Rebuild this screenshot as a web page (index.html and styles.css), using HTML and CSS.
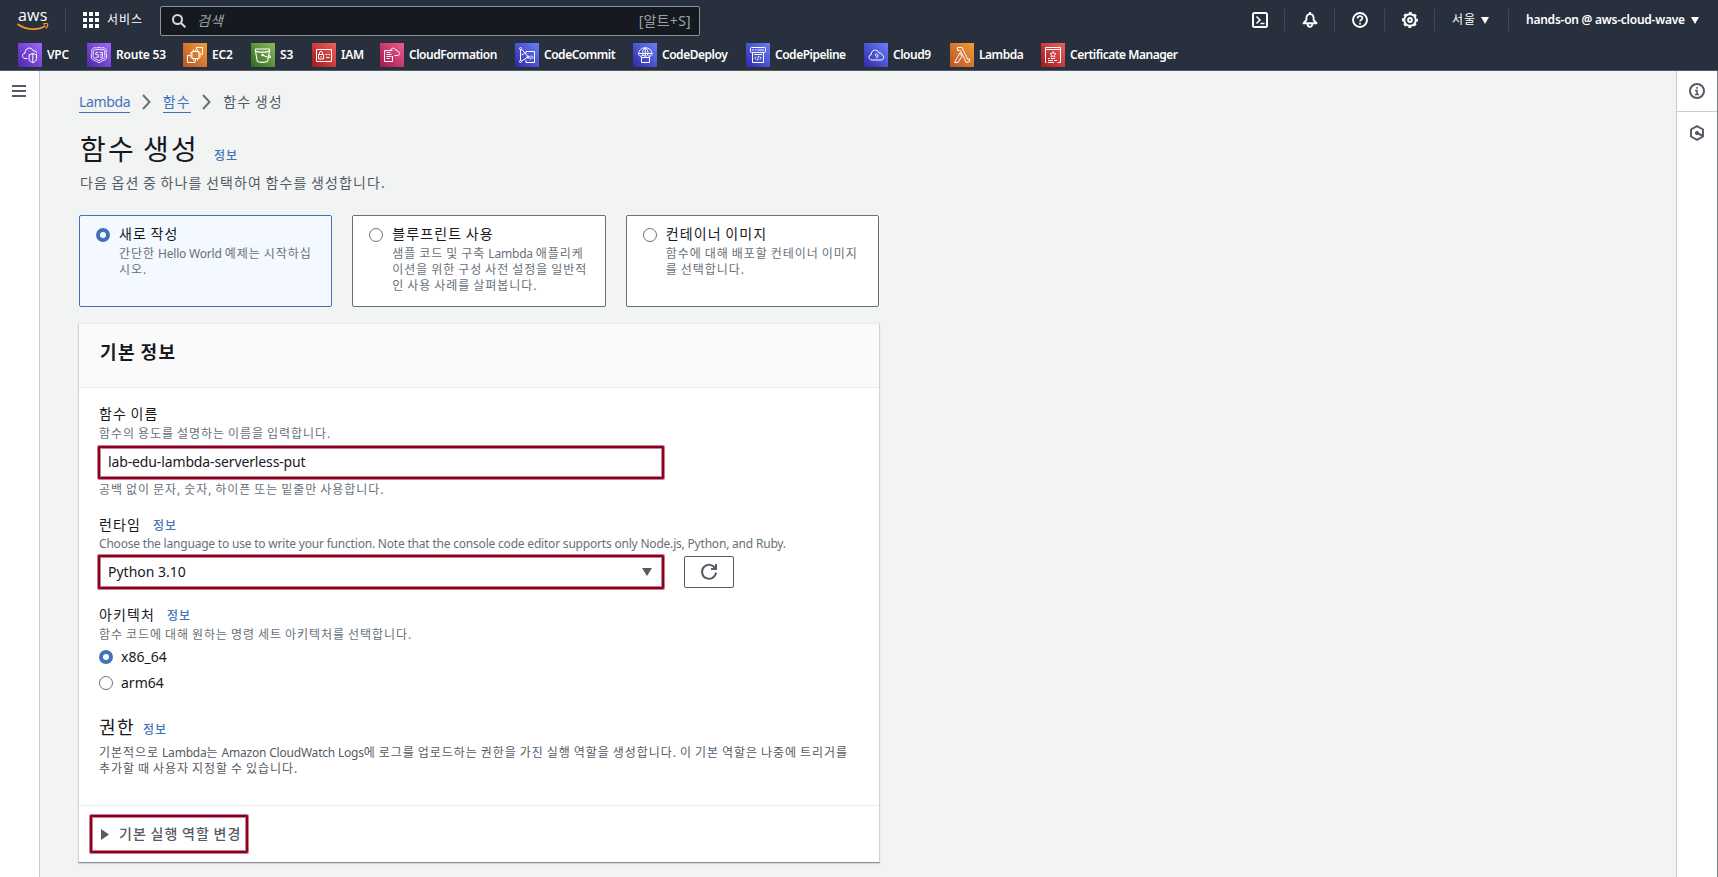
FILE: index.html
```html
<!DOCTYPE html>
<html lang="ko">
<head>
<meta charset="utf-8">
<title>함수 생성 - Lambda</title>
<link rel="stylesheet" href="styles.css">
</head>
<body>
<svg class="defs" width="0" height="0" aria-hidden="true">
  <defs>
    <linearGradient id="purple" x1="0" y1="1" x2="1" y2="0"><stop offset="0" stop-color="#4d27a8"/><stop offset="1" stop-color="#a166ff"/></linearGradient>
    <linearGradient id="orange" x1="0" y1="1" x2="1" y2="0"><stop offset="0" stop-color="#b8532b"/><stop offset="1" stop-color="#f29c34"/></linearGradient>
    <linearGradient id="green" x1="0" y1="1" x2="1" y2="0"><stop offset="0" stop-color="#2f6a1e"/><stop offset="1" stop-color="#8bba5c"/></linearGradient>
    <linearGradient id="red" x1="0" y1="1" x2="1" y2="0"><stop offset="0" stop-color="#a3181c"/><stop offset="1" stop-color="#f0615e"/></linearGradient>
    <linearGradient id="pink" x1="0" y1="1" x2="1" y2="0"><stop offset="0" stop-color="#a3184f"/><stop offset="1" stop-color="#ef5c8d"/></linearGradient>
    <linearGradient id="blue" x1="0" y1="1" x2="1" y2="0"><stop offset="0" stop-color="#3128a8"/><stop offset="1" stop-color="#6880f8"/></linearGradient>
  </defs>
</svg>

<header class="header">
  <div class="topbar">
    <div class="logo">
      <span class="logo-text">aws</span>
      <svg class="logo-smile" width="32" height="8" viewBox="0 0 32 8"><path d="M.5 1C9 7.400 21 7.600 28.500 2.700" fill="none" stroke="#f7981f" stroke-width="1.700"/><path d="M26 1.200c2-.8 4-.8 4.500-.3.400.6-.3 3-1.600 4.600" fill="none" stroke="#f7981f" stroke-width="1.200"/></svg>
    </div>
    <span class="sep sep-logo"></span>
    <div class="services">
      <svg width="16" height="16" viewBox="0 0 16 16" fill="#fff"><path d="M0 0h4v4H0zM6 0h4v4H6zM12 0h4v4h-4zM0 6h4v4H0zM6 6h4v4H6zM12 6h4v4h-4zM0 12h4v4H0zM6 12h4v4H6zM12 12h4v4h-4z"/></svg>
      <span class="ko">서비스</span>
    </div>
    <div class="search">
      <svg width="14" height="14" viewBox="0 0 14 14" fill="none" stroke="#d5dbdb" stroke-width="2"><circle cx="5.500" cy="5.500" r="4.500"/><path d="M8.800 8.800l4.500 4.500"/></svg>
      <span class="search-hint ko">검색</span>
      <span class="search-key ko">[알트+S]</span>
    </div>
    <div class="tools">
      <span class="tool"><svg width="16" height="16" viewBox="0 0 16 16" fill="none" stroke="#fff" stroke-width="2"><rect x="1" y="1" width="14" height="14" rx="1.500"/><path d="M4.500 4.500L8 8l-3.500 3.500M8.500 11.500h4" stroke-width="1.600"/></svg></span>
      <span class="sep"></span>
      <span class="tool"><svg width="16" height="16" viewBox="0 0 16 16" fill="none" stroke="#fff" stroke-width="1.900"><path d="M1.500 11.200h13L11.600 8V6C11.600 3.600 10 2.100 8 2.100S4.400 3.600 4.400 6v2z" stroke-linejoin="round"/><path d="M5.600 11.500c0 4.500 4.800 4.500 4.800 0"/><path d="M8 0v2"/></svg></span>
      <span class="sep sep-tall"></span>
      <span class="tool"><svg width="16" height="16" viewBox="0 0 16 16" fill="none" stroke="#fff" stroke-width="1.900"><circle cx="8" cy="8" r="7"/><path d="M5.600 6.400C5.600 3.200 10.400 3.300 10.400 6c0 1.700-2.400 1.700-2.400 3.500M8 10.700v1.800" stroke-width="1.700"/></svg></span>
      <span class="sep"></span>
      <span class="tool"><svg width="16" height="16" viewBox="0 0 16 16" fill="none" stroke="#fff"><circle cx="8" cy="8" r="5.800" stroke-width="2"/><circle cx="8" cy="8" r="7.100" stroke-width="1.700" stroke-dasharray="3.100 2.476" stroke-dashoffset="1.500"/><circle cx="8" cy="8" r="1.900" stroke-width="2"/></svg></span>
      <span class="sep"></span>
      <span class="menu region"><span class="ko">서울</span><svg width="8" height="7" viewBox="0 0 8 7"><path d="M0 0h8L4 7z" fill="#fff"/></svg></span>
      <span class="sep"></span>
      <span class="menu account"><span>hands-on @ aws-cloud-wave</span><svg width="8" height="7" viewBox="0 0 8 7"><path d="M0 0h8L4 7z" fill="#fff"/></svg></span>
    </div>
  </div>
  <nav class="favorites">
    <a class="fav"><svg width="24" height="24" viewBox="0 0 24 24"><path fill="url(#purple)" d="M0 0h24v24H0z"/><g fill="none" stroke="#fff"><path d="M9.500 15.500H7.200C3.500 15 3.700 10.500 7 10.300 6.800 5 13.300 2.900 15.300 8c2.200-.7 3.300.6 3.400 2.200"/><path d="M14.800 10.500l3.700 1.300v3.900c0 2-1.800 3.300-3.700 4-1.900-.7-3.700-2-3.700-4v-3.900zM14.800 11v8.300"/></g></svg>VPC</a>
    <a class="fav"><svg width="24" height="24" viewBox="0 0 24 24"><path fill="url(#purple)" d="M0 0h24v24H0z"/><g fill="none" stroke="#fff" stroke-width=".9"><path d="M7 4.500c1.700.8 3.500.3 5-.3 1.500.6 3.300 1.100 5 .3l2.500 2.600c-1.200 2 .5 4.500.2 6.900-.4 3-4.400 3.600-7.700 5.700-3.300-2.100-7.300-2.700-7.700-5.700-.3-2.400 1.400-4.900.2-6.900z"/><path d="M7.500 6.500c1.500.6 3 .2 4.500-.3 1.500.5 3 .9 4.500.3L17.700 8c-.6 1.800.5 3.800.2 5.500-.3 2-3 2.300-5.900 4.100-2.900-1.800-5.600-2.100-5.900-4.100-.3-1.700.8-3.700.2-5.500z"/><path d="M11.300 9.500H8.800v2.200h2.500v2.500H8.500M12.800 9.500h2.700v4.700h-2.800M13 11.800h2.500"/></g></svg>Route 53</a>
    <a class="fav"><svg width="24" height="24" viewBox="0 0 24 24"><path fill="url(#orange)" d="M0 0h24v24H0z"/><g fill="none" stroke="#fff"><path d="M13.500 6.500V4.500h6v7h-2M7 12.500H4.500v7h7.500V17"/><path d="M9 8.500h7v7H9zM10.500 6.500v2M12.500 6.500v2M14.500 6.500v2M10.500 15.500v2M12.500 15.500v2M14.500 15.500v2M7 10h2M7 12h2M7 14h2M16 10h2M16 12h2M16 14h2"/></g></svg>EC2</a>
    <a class="fav"><svg width="24" height="24" viewBox="0 0 24 24"><path fill="url(#green)" d="M0 0h24v24H0z"/><g fill="none" stroke="#fff" stroke-width="1.100"><path d="M4.500 6v2l1.700 10c1.500 1.800 9 1.800 10.500 0L18.500 8V6M4.500 6h14M4.500 8c2 1.500 12 1.500 14 0"/><circle cx="11.500" cy="12" r=".7"/><path d="M12 12.200c2 1 5.500 2.600 7.200 2.200.7-.3-.3-1.600-1.600-2.200"/></g></svg>S3</a>
    <a class="fav"><svg width="24" height="24" viewBox="0 0 24 24"><path fill="url(#red)" d="M0 0h24v24H0z"/><g fill="none" stroke="#fff"><path d="M4.500 6.500h15v12h-15z"/><path d="M6.500 11.500h5v4.500h-5zM7.500 11.500V9.700c0-1.700 3-1.700 3 0v1.800M9 13v1.500M13.500 11.500h2M16.500 11.500h1.500M14 14.500h3.500"/></g></svg>IAM</a>
    <a class="fav"><svg width="24" height="24" viewBox="0 0 24 24"><path fill="url(#pink)" d="M0 0h24v24H0z"/><g fill="none" stroke="#fff"><path d="M12.500 7.500h-8v11h8V13M6.500 9.500h4M6.500 11.500h5M6.500 13.500h5M6.500 15.500h3"/><path d="M10.500 7.500c.5-3 4.500-3 5.200-.3 1.400-.3 1.800.5 2 1.400 3 .5 2.300 4-.2 3.900h-3"/></g></svg>CloudFormation</a>
    <a class="fav"><svg width="24" height="24" viewBox="0 0 24 24"><path fill="url(#blue)" d="M0 0h24v24H0z"/><g fill="none" stroke="#fff"><path d="M11 10.500V8.500h8.500v11h-8.500V17"/><path d="M5.500 6v12M6.500 6.200l6.500 7.300M6.500 18l6.500-4M6.500 12l3-1.500"/><circle cx="5.500" cy="5.500" r="1"/><circle cx="5.500" cy="18.500" r="1"/><circle cx="13" cy="14" r="1"/><path d="M14.500 13L13.300 14.500l1.200 1.500M17 13l1 1.500-1 1.500M16.300 12.500l-1 4" stroke-width=".8"/></g></svg>CodeCommit</a>
    <a class="fav"><svg width="24" height="24" viewBox="0 0 24 24"><path fill="url(#blue)" d="M0 0h24v24H0z"/><g fill="none" stroke="#fff"><path d="M5.500 11.500C5.500 2.500 19 2.500 19 11.500c-1 2-3.200 2-4.500.5-1 1.500-3.500 1.500-4.500 0-1.300 1.500-3.500 1.500-4.500-.5zM10 12C9 8.500 10 6 12.200 5c2.200 1 3.300 3.500 2.300 7M12.200 5v8M5.600 10.500h13.300"/><path d="M8.500 14.500h8v5h-8zM7.500 13l1.500 2M17 13l-1.500 2"/></g></svg>CodeDeploy</a>
    <a class="fav"><svg width="24" height="24" viewBox="0 0 24 24"><path fill="url(#blue)" d="M0 0h24v24H0z"/><g fill="none" stroke="#fff"><rect x="4.500" y="4.500" width="15" height="5" rx="1"/><path d="M6 7h2M9 7h1.500M11.500 7H18M6.500 9.500v10h11v-10M8 11.500h8"/><path d="M10.200 13.500l-1.500 1.700 1.500 1.600M13.800 13.500l1.500 1.700-1.500 1.600M12.600 13l-1.200 4.500" stroke-width=".9"/></g></svg>CodePipeline</a>
    <a class="fav"><svg width="24" height="24" viewBox="0 0 24 24"><path fill="url(#blue)" d="M0 0h24v24H0z"/><g fill="none" stroke="#fff"><path d="M8 17c-3.800 0-4-5-.7-5.300C6.800 6.500 13.500 5.500 15 10c1.500-.7 2.500.3 2.600 1.700C20.800 12.500 20 17 17 17z"/><path d="M14 12.500c-.7 1-2.700.9-2.700-.5 0-1.500 2.700-1.500 2.700.3 0 1.500-.6 2.700-2.300 2.700" stroke-width=".8"/></g></svg>Cloud9</a>
    <a class="fav"><svg width="24" height="24" viewBox="0 0 24 24"><path fill="url(#orange)" d="M0 0h24v24H0z"/><path d="M7.500 4.500h4.500l5.800 12 1.700-.6v2.600l-3.300 1.100L10.500 7.500h-3zM10 9.800L4.500 19.500h3.600l3.700-6.200z" fill="none" stroke="#fff"/></svg>Lambda</a>
    <a class="fav"><svg width="24" height="24" viewBox="0 0 24 24"><path fill="url(#red)" d="M0 0h24v24H0z"/><g fill="none" stroke="#fff"><path d="M5.500 19.500h-1v-15h15v15h-3M4.500 6.500h15"/><path d="M12 8.500l.9 2 2.100.1-1.600 1.400.6 2.100-2-1.100-2 1.100.6-2.100L9 10.600l2.100-.1z" stroke-width=".9"/><path d="M7 15.500h2M10 15.500h4M7 17.500h5M13 17.500h3M7 19.500h6"/></g></svg>Certificate Manager</a>
  </nav>
</header>

<div class="shell">
  <aside class="rail rail-left"><svg width="14" height="12" viewBox="0 0 14 12" fill="#545b64"><path d="M0 0h14v2H0zM0 5h14v2H0zM0 10h14v2H0z"/></svg></aside>

  <main class="content">
    <nav class="crumbs ko">
      <a class="crumb-link en">Lambda</a>
      <svg width="9" height="16" viewBox="0 0 9 16"><path d="M1 1l6.500 7L1 15" fill="none" stroke="#687078" stroke-width="2"/></svg>
      <a class="crumb-link">함수</a>
      <svg width="9" height="16" viewBox="0 0 9 16"><path d="M1 1l6.500 7L1 15" fill="none" stroke="#687078" stroke-width="2"/></svg>
      <span>함수 생성</span>
    </nav>
    <div class="title-row"><h1 class="ko">함수 생성</h1><a class="info ko">정보</a></div>
    <p class="subtitle ko">다음 옵션 중 하나를 선택하여 함수를 생성합니다.</p>

    <div class="tiles">
      <label class="tile tile-on">
        <span class="radio radio-on"></span>
        <span><b class="tile-title ko">새로 작성</b><span class="hint ko">간단한 <i class="en">Hello World</i> 예제는 시작하십<br>시오.</span></span>
      </label>
      <label class="tile">
        <span class="radio"></span>
        <span><b class="tile-title ko">블루프린트 사용</b><span class="hint ko">샘플 코드 및 구축 <i class="en">Lambda</i> 애플리케<br>이션을 위한 구성 사전 설정을 일반적<br>인 사용 사례를 살펴봅니다.</span></span>
      </label>
      <label class="tile">
        <span class="radio"></span>
        <span><b class="tile-title ko">컨테이너 이미지</b><span class="hint ko">함수에 대해 배포할 컨테이너 이미지<br>를 선택합니다.</span></span>
      </label>
    </div>

    <section class="panel">
      <div class="panel-head"><h2 class="ko">기본 정보</h2></div>
      <div class="panel-body">
        <div class="field">
          <div class="label ko">함수 이름</div>
          <div class="hint ko">함수의 용도를 설명하는 이름을 입력합니다.</div>
          <div class="box input">lab-edu-lambda-serverless-put</div>
          <div class="hint hint-below ko">공백 없이 문자, 숫자, 하이픈 또는 밑줄만 사용합니다.</div>
        </div>
        <div class="field field-runtime">
          <div class="label ko">런타임<a class="info ko">정보</a></div>
          <div class="hint choose">Choose the language to use to write your function. Note that the console code editor supports only Node.js, Python, and Ruby.</div>
          <div class="select-row">
            <div class="box select"><span>Python 3.10</span><svg width="10" height="8" viewBox="0 0 10 8"><path d="M0 0h10L5 8z" fill="#545b64"/></svg></div>
            <button class="refresh" type="button"><svg width="18" height="18" viewBox="0 0 18 18" fill="none" stroke="#545b64" stroke-width="2"><path d="M15.200 5.500A7 7 0 1 0 16 9.500"/><path d="M16 1v5h-5"/></svg></button>
          </div>
        </div>
        <div class="field field-arch">
          <div class="label ko">아키텍처<a class="info ko">정보</a></div>
          <div class="hint ko">함수 코드에 대해 원하는 명령 세트 아키텍처를 선택합니다.</div>
          <label class="option"><span class="radio radio-on"></span>x86_64</label>
          <label class="option"><span class="radio"></span>arm64</label>
        </div>
        <div class="perm">
          <div class="perm-title"><h3 class="ko">권한</h3><a class="info ko">정보</a></div>
          <p class="perm-text ko">기본적으로 <i class="en">Lambda</i>는 <i class="en">Amazon CloudWatch Logs</i>에 로그를 업로드하는 권한을 가진 실행 역할을 생성합니다. 이 기본 역할은 나중에 트리거를<br>추가할 때 사용자 지정할 수 있습니다.</p>
        </div>
      </div>
      <div class="panel-foot">
        <div class="expander ko"><svg width="8" height="11" viewBox="0 0 8 11"><path d="M0 0l8 5.500L0 11z" fill="#545b64"/></svg>기본 실행 역할 변경</div>
      </div>
    </section>
  </main>

  <aside class="rail rail-right">
    <div class="rail-cell"><svg width="16" height="16" viewBox="0 0 16 16" fill="none" stroke="#545b64" stroke-width="2"><circle cx="8" cy="8" r="7"/><path d="M8 4v1.800M6 7.500h2v4M6 11.500h4" stroke-width="1.600"/></svg></div>
    <div class="rail-cell"><svg width="16" height="16" viewBox="0 0 16 16" fill="none" stroke="#545b64" stroke-width="1.900"><path d="M8 1.100l6 3.400v7L8 14.900l-6-3.400v-7z"/><circle cx="8" cy="8" r="1.600" fill="#545b64" stroke-width="1"/><path d="M8 8l6 3" stroke-width="2"/></svg></div>
  </aside>
</div>
</body>
</html>
```
FILE: styles.css
```css
* { box-sizing: border-box; }

body {
  margin: 0;
  height: 877px;
  overflow: hidden;
  display: flex;
  flex-direction: column;
  background: #f2f3f3;
  color: #16191f;
  font: 14px/22px "Noto Sans", "Noto Sans CJK KR", sans-serif;
}

h1, h2, h3, p { margin: 0; font-weight: 400; }
b, i { font-weight: 400; font-style: normal; }
svg { display: block; flex: none; }
.defs { position: absolute; }

.ko { letter-spacing: .08em; word-spacing: -.09em; }
.en { letter-spacing: -.017em; word-spacing: 0; }

/* header */
.header { flex: none; height: 71px; background: #282f3d; border-bottom: 1px solid #545b64; color: #fff; }
.topbar { display: flex; align-items: center; height: 40px; padding-left: 17px; }
.logo { width: 32px; }
.logo-text { display: block; height: 13px; font: 500 16px/11px "Open Sans", sans-serif; letter-spacing: .2px; padding-left: 1px; }
.sep { flex: none; width: 1px; height: 22px; background: #414750; }
.sep-tall { height: 24px; }
.sep-logo { margin-left: 16px; }
.services { flex: none; display: flex; align-items: center; gap: 8px; width: 94px; padding-left: 17px; font-size: 12px; white-space: nowrap; }
.search { flex: none; display: flex; align-items: center; width: 540px; height: 30px; margin-top: 2px; padding: 0 9px 0 11px; background: #16191f; border: 1px solid #879596; border-radius: 2px; color: #95a5a6; }
.search-hint { margin-left: 11px; font-style: italic; letter-spacing: 0; }
.search-key { margin-left: auto; letter-spacing: .02em; margin-right: -1px; }
.tools { flex: none; display: flex; align-items: center; margin-left: 535px; }
.tool { display: flex; justify-content: center; width: 49px; }
.menu { display: flex; align-items: center; white-space: nowrap; font-size: 12px; }
.region { width: 73px; padding-left: 17px; gap: 5px; }
.account { padding-left: 17px; gap: 6px; font-weight: 600; letter-spacing: -.24px; }

.favorites { display: grid; grid-template-columns: 69px 96px 68px 61px 68px 135px 118px 113px 118px 86px 91px auto; padding: 3px 0 0 18px; }
.fav { display: flex; align-items: center; gap: 5px; height: 24px; font-size: 12px; font-weight: 600; letter-spacing: -.48px; white-space: nowrap; }
.fav:nth-child(-n+5) { letter-spacing: -.2px; }

/* page frame */
.shell { flex: 1; display: flex; min-height: 0; }
.rail { flex: none; background: #fff; }
.rail-left { width: 40px; border-right: 1px solid #ccc; padding: 14px 0 0 12px; }
.rail-right { width: 42px; border-left: 1px solid #ccc; border-right: 1px solid #767b80; }
.rail-cell { display: flex; justify-content: center; padding: 12px 0; }
.rail-cell + .rail-cell { border-top: 1px solid #ccc; padding-top: 13px; }
.content { flex: 1; padding: 20px 0 0 39px; }

/* breadcrumbs and title */
.crumbs { display: flex; align-items: center; height: 22px; color: #545b64; }
.crumb-link { color: #4273b9; border-bottom: 1px solid #4273b9; line-height: 20px; height: 21px; }
.crumb-link.en { letter-spacing: -.025em; }
.crumbs svg { margin: 0 12px 0 11.500px; }
.title-row { display: flex; align-items: baseline; height: 54px; padding: 16px 0 0 1px; }
h1 { font-size: 28px; line-height: 40px; }
.info { margin-left: 15px; color: #4273b9; font-size: 12px; font-weight: 500; }
.subtitle { margin-top: 5px; padding-left: 1px; color: #545b64; }

/* option tiles */
.tiles { display: grid; grid-template-columns: repeat(3, 1fr); gap: 20px; width: 800px; margin-top: 21px; }
.tile { display: flex; gap: 9px; height: 92px; padding: 7px 0 0 16px; background: #fff; border: 1px solid #687078; border-radius: 2px; white-space: nowrap; }
.tile-on { background: #f3f9ff; border-color: #4273b9; }
.tile-title { display: block; line-height: 22px; }
.hint { display: block; margin-top: 1px; color: #687078; font-size: 12px; line-height: 16px; }
.radio { flex: none; width: 14px; height: 14px; margin-top: 5px; border: 1px solid #687078; border-radius: 50%; background: #fff; }
.radio-on { border: 4.500px solid #4273b9; }

/* form panel */
.panel { width: 802px; height: 540px; margin: 16px 0 0 -1px; background: #fff; border: 1px solid #d0d3d4; border-top-color: #eaeded; border-bottom-color: #879196; box-shadow: 0 1px 1px #d5d8d8; }
.panel-head { height: 64px; padding: 17px 21px 0; background: #fafafa; border-bottom: 1px solid #eaeded; }
h2 { font-size: 18px; font-weight: 700; line-height: 22px; }
.panel-body { height: 417px; padding: 15px 20px 0; }
.label { height: 22px; line-height: 22px; }
.label .info { margin-left: 12px; }
.field { margin-bottom: 16px; }
.field-runtime { margin-bottom: 15px; }
.field-arch { margin-bottom: 18px; }
.box { width: 566px; height: 33px; margin: 4px 0 0 -1px; padding: 0 10px 0 8px; border: 2px solid #8b0020; border-radius: 1px; box-shadow: 0 0 0 1px rgba(139, 0, 32, .5), inset 0 0 0 1px rgba(139, 0, 32, .5); line-height: 28px; letter-spacing: -.13px; }
.hint-below { margin-top: 3px; }
.choose { margin-top: 0; letter-spacing: -.2px; }
.select-row { display: flex; gap: 20px; }
.select { display: flex; align-items: center; justify-content: space-between; height: 34px; margin-top: 3px; letter-spacing: 0; }
.refresh { display: flex; align-items: center; justify-content: center; width: 50px; height: 32px; margin-top: 4px; padding: 0; background: #fff; border: 1px solid #545b64; border-radius: 2px; }
.option { display: flex; gap: 8px; height: 26px; padding-top: 3px; }
.option .radio { margin-top: 4px; }
.perm-title { display: flex; align-items: baseline; height: 28px; }
h3 { font-size: 18px; line-height: 28px; }
.perm-title .info { margin-left: 8px; }
.perm-text { margin-top: 4px; color: #545b64; font-size: 12px; line-height: 16px; white-space: nowrap; }
.panel-foot { border-top: 1px solid #eaeded; padding: 9px 0 0 11px; }
.expander { display: flex; align-items: center; gap: 10px; width: 158px; height: 38px; padding-left: 9px; border: 2px solid #8b0020; border-radius: 1px; box-shadow: 0 0 0 1px rgba(139, 0, 32, .5), inset 0 0 0 1px rgba(139, 0, 32, .5); color: #545b64; font-weight: 500; white-space: nowrap; }
```
